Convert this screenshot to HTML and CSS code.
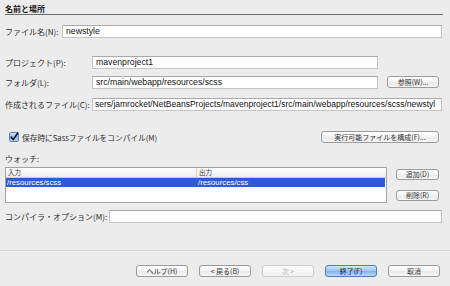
FILE: index.html
```html
<!DOCTYPE html>
<html lang="ja">
<head>
<meta charset="utf-8">
<link rel="stylesheet" href="styles.css">
</head>
<body>
<div class="dlg">
  <div class="title">名前と場所</div>

  <div class="row r-name">
    <span class="lbl w-name">ファイル名(N):</span>
    <div class="field grow">newstyle</div>
  </div>

  <div class="row r-proj">
    <span class="lbl w-std">プロジェクト(P):</span>
    <div class="field fixed">mavenproject1</div>
  </div>

  <div class="row r-folder">
    <span class="lbl w-std">フォルダ(L):</span>
    <div class="field fixed">src/main/webapp/resources/scss</div>
    <div class="btn btn-browse">参照(W)...</div>
  </div>

  <div class="row r-created">
    <span class="lbl w-std">作成されるファイル(C):</span>
    <div class="field grow long">sers/jamrocket/NetBeansProjects/mavenproject1/src/main/webapp/resources/scss/newstyl</div>
  </div>

  <div class="row r-check">
    <svg class="cb" width="10" height="10" viewBox="0 0 10 10">
      <defs>
        <linearGradient id="cbg" x1="0" y1="0" x2="0" y2="1">
          <stop offset="0" stop-color="#d6e6f8"/>
          <stop offset="0.5" stop-color="#8fbbed"/>
          <stop offset="1" stop-color="#b9d6f5"/>
        </linearGradient>
      </defs>
      <rect x="0.5" y="0.5" width="9" height="9" rx="1.5" fill="url(#cbg)" stroke="#5f84b8"/>
      <path d="M2.2 5.2 L4.2 7.6 L8.6 1.2" fill="none" stroke="#111" stroke-width="1.6" stroke-linecap="round" stroke-linejoin="round"/>
    </svg>
    <span class="lbl cb-lbl">保存時にSassファイルをコンパイル(M)</span>
    <div class="btn btn-config">実行可能ファイルを構成(F)...</div>
  </div>

  <div class="watch-lbl">ウォッチ:</div>

  <div class="watch">
    <div class="table">
      <div class="thead">
        <div class="th th1">入力</div>
        <div class="th th2">出力</div>
      </div>
      <div class="trow sel">
        <div class="td td1">/resources/scss</div>
        <div class="td td2">/resources/css</div>
      </div>
    </div>
    <div class="side">
      <div class="btn btn-side">追加(D)</div>
      <div class="btn btn-side">削除(R)</div>
    </div>
  </div>

  <div class="row r-comp">
    <span class="lbl w-comp">コンパイラ・オプション(M):</span>
    <div class="field grow"></div>
  </div>

  <div class="sep"></div>

  <div class="footer">
    <div class="btn fbtn">ヘルプ(H)</div>
    <div class="btn fbtn">&lt; 戻る(B)</div>
    <div class="btn fbtn disabled">次 &gt;</div>
    <div class="btn fbtn default">終了(F)</div>
    <div class="btn fbtn">取消</div>
  </div>
</div>
</body>
</html>
```
FILE: styles.css
```css
html, body {
  margin: 0;
  padding: 0;
}
body {
  background: #ececec;
  font-family: "Noto Sans CJK JP", "Liberation Sans", sans-serif;
  font-size: 8px;
  color: #2e2e2e;
  width: 450px;
  height: 286px;
  overflow: hidden;
}
.dlg {
  width: 450px;
  height: 286px;
  box-sizing: border-box;
  padding: 3px 8px 0 5px;
}
.title {
  height: 11px;
  line-height: 11px;
  font-weight: bold;
  font-size: 8px;
  color: #1a1a1a;
  border-bottom: 1px solid #6e6e6e;
  margin-right: -1px;
}
.row {
  display: flex;
  align-items: center;
}
.lbl {
  flex: none;
  white-space: nowrap;
  line-height: 11px;
}
.w-name { width: 57px; }
.w-std { width: 87px; }
.w-comp { width: 104px; }

.field {
  box-sizing: border-box;
  height: 13px;
  background: #fff;
  border: 1px solid #c3c3c3;
  border-top-color: #a9a9a9;
  padding: 0 3px;
  font-family: "Liberation Sans", "DejaVu Sans", sans-serif;
  font-size: 8.7px;
  line-height: 11px;
  color: #111;
  white-space: nowrap;
  overflow: hidden;
}
.grow { flex: 1; }
.fixed { width: 286px; flex: none; }
.long {
  font-size: 8.5px;
  padding: 0 1px 0 2px;
}

.r-name { margin-top: 10px; height: 13px; }
.r-proj { margin-top: 18px; height: 13px; }
.r-folder { margin-top: 7px; height: 13px; }
.r-created { margin-top: 9px; height: 13px; }
.r-check { margin-top: 20px; height: 12px; }
.r-comp { margin-top: 7px; height: 13px; }

.btn {
  box-sizing: border-box;
  height: 12px;
  border: 1px solid #9b9b9b;
  border-radius: 3px;
  background: linear-gradient(#ffffff, #f3f3f3 50%, #e9e9e9 51%, #f6f6f6);
  font-size: 7px;
  line-height: 10px;
  text-align: center;
  color: #333;
  white-space: nowrap;
  flex: none;
}
.btn-browse {
  width: 52px;
  margin-left: 9px;
  margin-top: -1px;
}
.cb {
  flex: none;
  margin-left: 4px;
  margin-right: 3px;
  display: block;
}
.cb-lbl {
  font-size: 7.7px;
}
.btn-config {
  width: 118px;
  margin-left: auto;
  margin-right: 3px;
}

.watch-lbl {
  margin-top: 10px;
  height: 11px;
  line-height: 11px;
}
.watch {
  display: flex;
  margin-top: 3px;
}
.table {
  box-sizing: border-box;
  width: 382px;
  height: 36px;
  border: 1px solid #a2a2a2;
  background: #fff;
  flex: none;
}
.thead {
  display: flex;
  height: 9px;
  border-bottom: 1px solid #c9c9c9;
  background: linear-gradient(#ffffff, #eeeeee);
  font-size: 6.5px;
  line-height: 9px;
  color: #333;
}
.th {
  padding-left: 2px;
  box-sizing: border-box;
}
.th1 { width: 190px; }
.th2 { flex: 1; border-left: 1px solid #d0d0d0; }
.trow {
  display: flex;
  height: 9px;
  font-family: "Liberation Sans", "DejaVu Sans", sans-serif;
  font-size: 7.8px;
  line-height: 9px;
}
.sel {
  background: #2b5cd2;
  color: #fff;
  margin-right: 1px;
}
.td {
  padding-left: 1px;
  box-sizing: border-box;
}
.td1 { width: 191px; }
.td2 { flex: 1; }
.side {
  display: flex;
  flex-direction: column;
  gap: 10px;
  margin-left: 9px;
  padding-top: 2px;
}
.btn-side {
  width: 43px;
  height: 11px;
  line-height: 9px;
}

.sep {
  margin: 27px -8px 0 -5px;
  border-top: 1px solid #d7d7d7;
}
.footer {
  display: flex;
  justify-content: flex-end;
  gap: 11px;
  margin-top: 14px;
  padding-right: 2px;
}
.fbtn {
  width: 52px;
}
.fbtn.disabled {
  border-color: #cdcdcd;
  color: #b4b4b4;
  background: linear-gradient(#fbfbfb, #f1f1f1);
}
.fbtn.default {
  border-color: #4c7dbd;
  color: #1c1c1c;
  background: linear-gradient(#d3e6fb, #9ac3f0 50%, #7fb1ec 51%, #bcd9f7);
}
```
